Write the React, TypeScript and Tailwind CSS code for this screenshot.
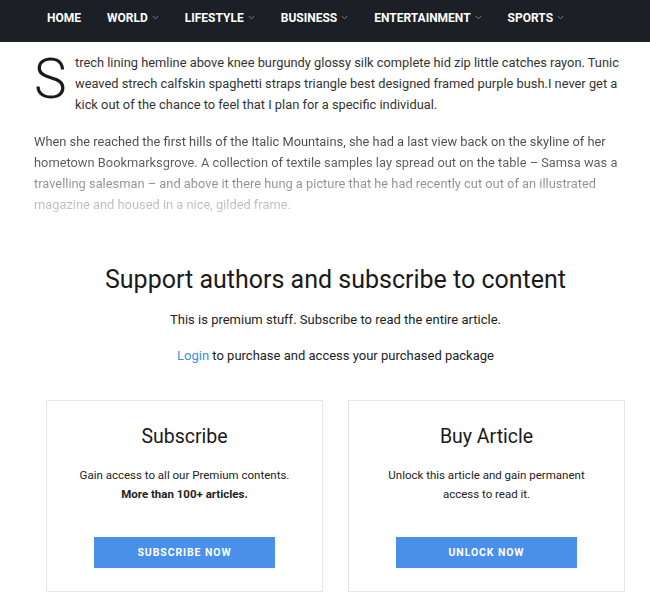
import React from "react";

const Chevron = () => (
  <svg width="7" height="5" viewBox="0 0 7 5" className="ml-[4px]" fill="none">
    <path d="M0.8 1 L3.5 3.8 L6.2 1" stroke="#7d808a" strokeWidth="1" />
  </svg>
);

const navItems: { label: string; chevron: boolean }[] = [
  { label: "HOME", chevron: false },
  { label: "WORLD", chevron: true },
  { label: "LIFESTYLE", chevron: true },
  { label: "BUSINESS", chevron: true },
  { label: "ENTERTAINMENT", chevron: true },
  { label: "SPORTS", chevron: true },
];

export default function App() {
  return (
    <div className="w-[650px] h-[604px] bg-white overflow-hidden" style={{ fontFamily: "Roboto, 'Liberation Sans', sans-serif" }}>
      <nav className="h-[42px] bg-[#1d1f26] flex items-center pl-[47px] pb-[7px] gap-[26px]">
        {navItems.map((n) => (
          <div key={n.label} className="flex items-center text-white text-[12px] font-bold">
            {n.label}
            {n.chevron && <Chevron />}
          </div>
        ))}
      </nav>

      <div className="pl-[34px] pr-[28px] pt-[10px]">
        <div className="flex">
          <div className="text-[55px] leading-[48px] font-light text-[#1a1a1a] w-[41px] pt-[3px] shrink-0">S</div>
          <p className="text-[12.85px] leading-[21px] text-[#333]">
            trech lining hemline above knee burgundy glossy silk complete hid zip little catches rayon. Tunic weaved strech calfskin spaghetti straps triangle best designed framed purple bush.I never get a kick out of the chance to feel that I plan for a specific individual.
          </p>
        </div>
        <p className="mt-[16px] text-[12.85px] leading-[21px] bg-[linear-gradient(to_bottom,#444_0%,#555_35%,#a9a9a9_75%,#cfcfcf_100%)] bg-clip-text text-transparent">
          When she reached the first hills of the Italic Mountains, she had a last view back on the skyline of her hometown Bookmarksgrove. A collection of textile samples lay spread out on the table – Samsa was a travelling salesman – and above it there hung a picture that he had recently cut out of an illustrated magazine and housed in a nice, gilded frame.
        </p>
      </div>

      <div className="ml-[46px] w-[579px]">
        <div className="flex flex-col items-center mt-[49px]">
          <h2 className="text-[25px] leading-[32px] text-[#1a1a1a] whitespace-nowrap">Support authors and subscribe to content</h2>
          <p className="mt-[14px] text-[13px] leading-[20px] text-[#222]">This is premium stuff. Subscribe to read the entire article.</p>
          <p className="mt-[16px] text-[13px] leading-[20px] text-[#222]">
            <span className="text-[#3f8fd2]">Login</span> to purchase and access your purchased package
          </p>
        </div>

        <div className="flex gap-[25px] mt-[34px]">
          <div className="w-[277px] h-[192px] border border-[#e6e6e6] flex flex-col items-center">
            <h3 className="mt-[24px] text-[19.5px] leading-[24px] text-[#1a1a1a]">Subscribe</h3>
            <p className="mt-[17px] text-[11.5px] leading-[19px] text-[#222] text-center">
              Gain access to all our Premium contents.
              <br />
              <span className="font-bold">More than 100+ articles.</span>
            </p>
            <button className="mt-[33px] w-[181px] h-[31px] bg-[#4a90e8] text-white text-[10.5px] font-bold tracking-[0.9px]">SUBSCRIBE NOW</button>
          </div>
          <div className="w-[277px] h-[192px] border border-[#e6e6e6] flex flex-col items-center">
            <h3 className="mt-[24px] text-[19.5px] leading-[24px] text-[#1a1a1a]">Buy Article</h3>
            <p className="mt-[17px] text-[11.5px] leading-[19px] text-[#222] text-center w-[200px]">
              Unlock this article and gain permanent access to read it.
            </p>
            <button className="mt-[33px] w-[181px] h-[31px] bg-[#4a90e8] text-white text-[10.5px] font-bold tracking-[0.9px]">UNLOCK NOW</button>
          </div>
        </div>
      </div>
    </div>
  );
}
